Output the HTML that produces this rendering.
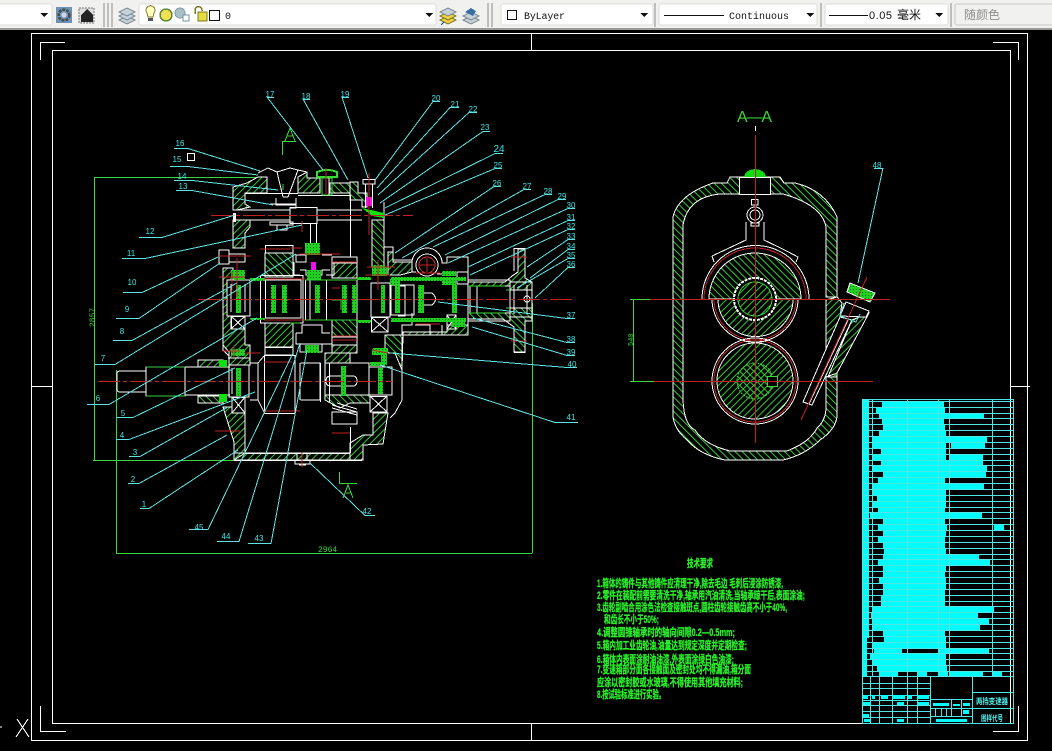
<!DOCTYPE html>
<html lang="zh"><head><meta charset="utf-8"><title>CAD</title>
<style>
html,body{margin:0;padding:0;background:#000;width:1052px;height:751px;overflow:hidden}
svg{display:block}
text{font-family:"Liberation Sans","Noto Sans CJK SC",sans-serif}
.m{font-family:"Liberation Mono","Noto Sans CJK SC",monospace}
.w{fill:none;stroke:#fff;stroke-width:1}
.c{fill:none;stroke:#5fe3e3;stroke-width:1}
.g{fill:none;stroke:#38d838;stroke-width:1}
.r{fill:none;stroke:#c02222;stroke-width:1}
.rc{fill:none;stroke:#c02222;stroke-width:1;stroke-dasharray:22 3 4 3}
.l text{fill:#3ee6e6;font-size:8px;text-anchor:middle}
.t text{fill:#2bf02b;font-size:11px;font-weight:bold;stroke:#2bf02b;stroke-width:.3}
</style></head><body>
<svg width="1052" height="751" viewBox="0 0 1052 751" xmlns="http://www.w3.org/2000/svg" shape-rendering="crispEdges">
<defs>
<pattern id="a" width="5" height="5" patternUnits="userSpaceOnUse" patternTransform="rotate(45)"><rect width="1" height="5" fill="#35c935"/></pattern>
<pattern id="b" width="5" height="5" patternUnits="userSpaceOnUse" patternTransform="rotate(-45)"><rect width="1" height="5" fill="#35c935"/></pattern>
<pattern id="d" width="3" height="3" patternUnits="userSpaceOnUse"><rect width="3" height="3" fill="#1fd01f"/><rect x="1" y="1" width="1" height="1" fill="#062"/></pattern>
</defs>
<rect width="1052" height="751" fill="#000"/>

<!-- toolbar -->
<rect width="1052" height="28" fill="#f1f1ef"/>
<rect y="28" width="1052" height="2" fill="#9a9a98"/>
<g fill="#fff" stroke="#dcdcd8"><rect x="-3" y="4" width="55" height="21" rx="2"/><rect x="139" y="4" width="297" height="21" rx="2"/><rect x="501" y="4" width="152" height="21" rx="2"/><rect x="659" y="4" width="158" height="21" rx="2"/><rect x="825" y="4" width="123" height="21" rx="2"/></g>
<rect x="955" y="4" width="100" height="21" rx="2" fill="#f1f1ef" stroke="#c8c8c4"/>
<g fill="#111"><path d="M40 13h8l-4 4z"/><path d="M425 13h8l-4 4z"/><path d="M640 13h8l-4 4z"/><path d="M806 13h8l-4 4z"/><path d="M935 13h8l-4 4z"/></g>
<g fill="none" stroke="#8a8a88"><path d="M104 3v24M108 3v24M112 3v24M488 3v24M492 3v24M655 3v24M821 3v24M951 3v24"/></g>
<!-- gear icon -->
<rect x="56" y="7" width="16" height="16" fill="#6d92b5"/>
<circle cx="64" cy="15" r="5.500" fill="none" stroke="#4a4a4a" stroke-width="2.500" stroke-dasharray="3 1"/><circle cx="64" cy="15" r="2.500" fill="#cfd8e0"/>
<!-- house icon -->
<rect x="79" y="8" width="15" height="15" fill="#dedede" stroke="#777" stroke-dasharray="2 1"/>
<path d="M81 15l6-6 6 6v7H81z" fill="#222"/>
<!-- layers icons -->
<g fill="#c5d2d8" stroke="#6f7f88"><path d="M119 20l8-4 8 4-8 4z"/><path d="M119 16l8-4 8 4-8 4z"/><path d="M119 12l8-4 8 4-8 4z"/></g>
<path d="M147 13a4.500 4.500 0 1 1 7 0l-1 4h-5z" fill="#ffffc0" stroke="#7a7a30"/><rect x="148" y="18" width="5" height="3" fill="#555"/>
<circle cx="166" cy="15" r="6" fill="#f2e050" stroke="#5b8a3a" stroke-width="1.500"/>
<circle cx="180" cy="13" r="5" fill="#a8c0c8" stroke="#7a9aa5"/><rect x="183" y="15" width="6" height="6" fill="#fff" stroke="#7a8fa8"/>
<path d="M195 14v-4a3.500 3.500 0 0 1 7 0v1" fill="none" stroke="#7a7a20" stroke-width="1.500"/><rect x="198" y="12" width="9" height="9" fill="#e4dc40" stroke="#7a7a20"/>
<rect x="209.500" y="10.500" width="10" height="10" fill="#fff" stroke="#111"/>
<text x="225" y="19" font-size="10" fill="#111" class="m">0</text>
<g fill="#f0d040" stroke="#6f6a20"><path d="M440 20l8-4 8 4-8 4z"/><path d="M440 16l8-4 8 4-8 4z"/></g><path d="M440 12l8-4 8 4-8 4z" fill="#c5d2d8" stroke="#6f7f88"/><path d="M441 25l3-3" stroke="#124a9a"/>
<g fill="#c5d2d8" stroke="#6f7f88"><path d="M463 20l8-4 8 4-8 4z"/><path d="M463 16l8-4 8 4-8 4z"/></g><path d="M465 12l6-4 5 3-3 5z" fill="#3a6ea8"/>
<rect x="507.500" y="10.500" width="9" height="9" fill="#fff" stroke="#111"/>
<text x="524" y="19" font-size="10" fill="#111" class="m" textLength="41">ByLayer</text>
<path d="M664 15.500h60" stroke="#111" fill="none"/>
<text x="729" y="19" font-size="10" fill="#111" class="m" textLength="60">Continuous</text>
<path d="M829 15.500h39" stroke="#111" fill="none"/>
<text x="869" y="19" font-size="11" fill="#111" textLength="23">0.05</text>
<text x="897" y="19" font-size="12" fill="#111" textLength="24">毫米</text>
<text x="964" y="19" font-size="12" fill="#8d8d8d" textLength="36">随颜色</text>

<!-- frames -->
<g class="w">
<rect x="31.500" y="33.500" width="996" height="707"/>
<rect x="52.500" y="50.500" width="958" height="673"/>
<path d="M65 42.500H40.500V60M993 42.500H1018.500V60M40.500 706V731.500H66M993 731.500H1018.500V706"/>
<path d="M531.500 33v17M531.500 724v17M31 386.500h21M1011 386.500h19"/>
<path d="M17 719l12 18M28 719l-12 18M0 727h2"/>
</g>

<!-- dimensions left -->
<g class="g">
<path d="M94.500 177V460M94 177.500H258M93 460.500H234M116.500 370V553M116 553.500H532M532.500 303V553"/>
<path d="M282.500 155V141.500H296M285 141l5-13 5 13M287 136h6"/>
<path d="M339.500 472V483.500H357M343 498l5-13 5 13M345 493h6"/>
</g>
<text transform="translate(95,327) rotate(-90)" font-size="8" fill="#38d838" class="m">2857</text>
<text x="318" y="552" font-size="8" fill="#38d838" class="m">2964</text>

<!-- hatched bodies left view -->
<g stroke="#fff" stroke-width="1">
<path fill="url(#a)" d="M233 187L247 183L258 177H267V193H245V204L250 207L237 210H233Z"/>
<path fill="url(#a)" d="M233 220H250V227L245 233V248H233Z"/>
<path fill="url(#a)" d="M298 177L307 172V178H320V193H298Z"/>
<path fill="url(#b)" d="M330 183H350V193H330Z"/>
<path fill="url(#b)" d="M350 182H358V193H367V207H362V200H350Z"/>
<path fill="url(#b)" d="M372 220H384V267H372Z"/>
<path fill="url(#a)" d="M223 268H233V280H227V316H231V329H245V345H250V365H229V352L223 345Z"/>
<path fill="url(#a)" d="M223 407L234 442V460L245 453V413H232V407Z"/>
<path fill="url(#a)" d="M234 453H350V460H234Z"/>
<path fill="url(#a)" d="M350 453V443L363 435H373V413H388L383 444L363 445V460H350Z"/>
<path fill="url(#b)" d="M385 335H403L402 370L395 353H385Z"/>
<path fill="url(#a)" d="M388 252H393V262H412V272L400 275H388Z"/>
<path fill="url(#b)" d="M265 253H293V277H265Z"/>
<path fill="url(#a)" d="M265 323H293V347H265Z"/>
<path fill="url(#a)" d="M332 263H357V278H332Z"/>
<path fill="url(#b)" d="M332 320H357V337H332Z"/>
<path fill="url(#a)" d="M332 345H357V353H332Z"/>
<path fill="url(#a)" d="M325 353H350V363H325Z"/>
<path fill="url(#b)" d="M325 395H370V403H350L340 408L325 400Z"/>
<path fill="url(#a)" d="M198 360H223V367H198Z"/>
<path fill="url(#b)" d="M198 396H223V403H198Z"/>
<path fill="url(#a)" d="M468 282H505L512 276L518 272V249H525V278L532 282V290H510V286H468Z"/>
<path fill="url(#b)" d="M468 313H510V308H532V321H525V352H514V327L503 319H468Z"/>
<path fill="url(#a)" d="M403 335H468V325H447V332H403Z"/>
</g>

<!-- white lines -->
<g class="w">
<path d="M258 173L268 168L277 172L283 197M290 168L277 172M290 168L298 170L307 172V176M298 170L288 197M283 197H288M276 198V205H296V198M270 204H296V208H290"/>
<path d="M235 210H290M235 220H290M290 207.500H317V223.500H290ZM317 210H362M317 220H362M310.500 223V252M316.500 223V252M350.500 195V257M298 195.500H350"/>
<path d="M270 222H293V225H270ZM277 225V230H287V225"/>
<path d="M363 179.500H375V184H363ZM365.500 184V208M372.500 184V208"/>
<path d="M219 250H229V264H219ZM229 254H245V262H229Z"/>
<path d="M265.500 245.500H293V253H265.500ZM260.500 275.500H303V323H260.500ZM265.500 280V318H301V280ZM265 347.500H293V355H265Z"/>
<path d="M264.500 355.500H295V413.500H264.500ZM258 363L264 356M258 400L264 412M258 363V400"/>
<path d="M305.500 280H357V320H305.500ZM310 280V320M326.500 280V320"/>
<path d="M332 257H357V263H332ZM357 337H332V345H357Z"/>
<path d="M296 255H306V262H296ZM322 255H332M294 262V275H300M334 262V275H326M300 270H306V275H322V270H330"/>
<path d="M296 333H302V325H322V333H330M296 333V344H332V333M300 344V352H322V344"/>
<path d="M227 280H250V316H227ZM231 284V312M245 284V312"/>
<path d="M231.500 316.500H245V329H231.500ZM231 316L245 329M245 316L231 329"/>
<path d="M371.500 317.500H388V332H371.500ZM371 317L388 332M388 317L371 332"/>
<path d="M232 397.500H245V413H232ZM232 397L245 413M245 397L232 413"/>
<path d="M370 396.500H387V412H370ZM370 396L387 412M387 396L370 412"/>
<path d="M229 365H249V397H229ZM232 368V394M250 363H258V400H250M228 358H250V365"/>
<path d="M371 283H390V317H371ZM369 367H392V395H369Z"/>
<path d="M325 363H369V395H325ZM329.500 363V402M320.500 363V402M300.500 363H320V400H300.500M300 363V400"/>
<path d="M331 376H353Q357 376 357 381Q357 386 353 386H331Q326 386 326 381Q326 376 331 376Z"/>
<path d="M332 412H357V424H332ZM332 405L357 412M332 408L357 415M337 403L357 409"/>
<path d="M350.500 427V453M245 453.500H350M234 460.500H362"/>
<path d="M223 268V350L229 356V365"/>
<path d="M117 374Q117 371 120 371H146V392H120Q117 392 117 389ZM146 367H185V396H146ZM185 367H230M185 395H230M185 367V396"/>
<path d="M297 453V460M307 453V460M295 460.500H310V464H295ZM299 465H306"/>
<path d="M245 193.500H298M384 202V247H393V260H412"/>
<path d="M412 263A15 15 0 0 1 442 263H447V257H468V335H403M402 337V400L395 413L390 418"/>
<path d="M412 263V272H416M437 274H447"/>
<path d="M468 280H510V282H532V317H510V321H468M470 286H505M470 313H505M477 286V313M470 286V313"/>
<path d="M514 248.500H525V278M514 248V271M514 352.500H525V321M514 352V327"/>
<path d="M510 282V317M514 285V314M527 285V314M520 290H532M520 308H532M532 290V308"/>
<path d="M391 285H414V315H391ZM402 335V325H412V313M415 325H430V335M442 325V335M422 293H432Q439 299 432 305H422Q415 299 422 293Z"/>
<path d="M447 315H456V329H447ZM447 315L456 329M456 315L447 329M457 272H468V284H457Z"/>
<path d="M398 286H405V316H398"/>
</g>
<circle cx="427" cy="265" r="11" class="w"/>
<circle cx="427" cy="265" r="8" class="r" style="stroke:#d03030"/>
<circle cx="527" cy="299" r="3" class="w"/>

<!-- green solid & dotted -->
<g fill="url(#d)">
<rect x="271" y="285" width="5" height="28"/><rect x="282" y="285" width="5" height="28"/>
<rect x="315" y="285" width="5" height="28"/><rect x="342" y="285" width="5" height="28"/><rect x="352" y="285" width="5" height="28"/>
<rect x="236" y="285" width="5" height="28"/><rect x="381" y="285" width="4" height="28"/><rect x="247" y="286" width="1" height="1"/>
<rect x="236" y="368" width="5" height="28"/><rect x="341" y="366" width="5" height="30"/><rect x="378" y="368" width="5" height="26"/>
<rect x="231" y="270" width="14" height="9"/><rect x="372" y="267" width="15" height="9"/>
<rect x="231" y="349" width="14" height="7"/><rect x="372" y="349" width="15" height="6"/>
<rect x="305" y="243" width="15" height="12"/><rect x="307" y="270" width="14" height="10"/><rect x="305" y="345" width="14" height="8"/>
<rect x="250" y="278" width="15" height="3"/><rect x="357" y="277" width="14" height="3"/><rect x="250" y="318" width="15" height="2"/><rect x="357" y="320" width="14" height="3"/>
<rect x="391" y="277" width="75" height="4" /><rect x="391" y="318" width="75" height="4"/>
<rect x="442" y="271" width="14" height="5"/><rect x="442" y="281" width="14" height="4"/><rect x="452" y="318" width="13" height="9"/>
<rect x="373" y="348" width="15" height="5"/><rect x="370" y="362" width="15" height="4"/>
<rect x="372" y="265" width="13" height="6"/><rect x="390" y="279" width="10" height="6"/><rect x="418" y="285" width="6" height="28"/><rect x="452" y="285" width="5" height="28"/><rect x="395" y="285" width="5" height="28"/>
<rect x="234" y="274" width="10" height="6"/><rect x="381" y="354" width="6" height="11"/>
</g>
<g fill="#10e010">
<rect x="219" y="360" width="8" height="7"/><rect x="219" y="394" width="8" height="8"/>
<path d="M362 208L384 213V218L372 216Z"/>
<path d="M317 172Q327 168 337 172V177H317Z" fill="none" stroke="#30e030" stroke-width="2"/>
</g>
<path d="M322 178H332V195H322Z" fill="none" stroke="#30e030" stroke-width="1"/>
<path d="M326 178V195M329 178V195" stroke="#fff" fill="none"/>
<path d="M146 367H185M146 396H185M320 280H357M290 323H300M305 280H357M305 320H357" stroke="#3bd03b" fill="none"/>
<path d="M283 300V290M283 300H288M341 300H332M341 300V310M468 286H505M468 313H505" stroke="#38d838" fill="none"/>
<path d="M510 290H506M510 308H506" stroke="#38d838"/>
<path d="M283 190V184" stroke="#38d838" fill="none"/>
<rect x="311" y="262" width="5" height="8" fill="#f010f0"/>
<rect x="366" y="197" width="6" height="9" fill="#f010f0"/>
<rect x="233" y="213" width="3" height="9" fill="#fff"/>

<!-- red center lines -->
<g class="rc"><path d="M198 299.500H574"/><path d="M98 381.500H392"/><path d="M211 215.500H413"/></g>
<g class="r">
<path d="M326 168V195M369 173V235M302 452V467M302 221V232M237 258V297M219 256H251M265 249H290M260 249H265M291 248H302"/>
<path d="M264 362H292M264 411H300M245 353H260M332 288H340M332 340H357M332 433H350M215 431H240M222 351H240M234 345V357M372 350L388 353M378 260V290M367 267H395M365 275H390M511 257H527M511 341H527M416 324H440M416 273H440M264 279H305M264 320H305M332 262H357M332 336H357M219 277H245M232 272V290M427 258V272M420 265H434M300 254H340"/>
</g>

<!-- leaders -->
<g class="c">
<path d="M174 148.500H188L260 171M170 166.500H188L258 175M174 180.500H192L278 190M176 190.500H192L273 205M139 237.500H162L235 215M122 258.500H145L302 225M123 292.500H142L218 257M116 318.500H139L220 263M113 340.500H132L237 283M95 364.500H115L296 254M87 404.500H109L257 318M117 417.500H133L235 368M116 439.500H129L255 392M129 456.500H140L228 407M128 483.500H139L227 435M140 508.500H149L238 450"/>
<path d="M189 529.500H208L293 353M217 541.500H239L300 343M248 543.500H271L307 350M375 515.500H365L310 463"/>
<path d="M267 97.500H274M267 97L323 170M303 99.500H310M303 99L348 180M342 97.500H349M342 97L368 178"/>
<path d="M440 101.500H433L375 180M459 107.500H450L377 188M477 112.500H469L378 195M490 131.500H483L380 203M503 153.500H495L385 208M502 168.500H495L385 215M501 186.500H494L395 253M531 189.500H524L402 258M552 194.500H545L433 247M566 199.500H558L445 255M575 208.500H568L448 263M575 220.500H568L468 267M575 229.500H568L470 275M575 239.500H568L527 267M575 249.500H568L530 278M575 258.500H568L517 288M575 267.500H568L535 298"/>
<path d="M575 318.500H567L438 302M575 342.500H567L473 318M575 355.500H567L472 327M577 367.500H567L390 353M578 422.500H555L380 365"/>
<path d="M883 168.500H874M883 168L858 283"/>
</g>
<rect x="187.500" y="153.500" width="7" height="7" class="w"/>

<g class="l">
<text x="180" y="146">16</text><text x="177" y="162" font-size="9">15</text><text x="182" y="179">14</text><text x="183" y="189">13</text><text x="150" y="234">12</text><text x="131" y="256">11</text><text x="132" y="285">10</text><text x="127" y="312">9</text><text x="122" y="334">8</text><text x="103" y="361">7</text><text x="98" y="401">6</text><text x="123" y="416">5</text><text x="122" y="438">4</text><text x="135" y="455">3</text><text x="133" y="482">2</text><text x="144" y="507">1</text><text x="199" y="530">45</text><text x="226" y="539">44</text><text x="259" y="541">43</text><text x="367" y="514">42</text>
<text x="270" y="97">17</text><text x="306" y="99">18</text><text x="345" y="97">19</text><text x="436" y="101">20</text><text x="455" y="107">21</text><text x="473" y="112">22</text><text x="485" y="130">23</text><text x="499" y="152" style="font-size:10px">24</text><text x="498" y="168">25</text><text x="497" y="186">26</text><text x="527" y="189">27</text><text x="548" y="194">28</text><text x="562" y="199">29</text><text x="571" y="208">30</text><text x="571" y="220">31</text><text x="571" y="229">32</text><text x="571" y="239">33</text><text x="571" y="249">34</text><text x="571" y="258">35</text><text x="571" y="267">36</text><text x="571" y="318">37</text><text x="571" y="342">38</text><text x="571" y="355">39</text><text x="572" y="367">40</text><text x="571" y="420">41</text><text x="877" y="168">48</text>
</g>

<!-- A-A view -->
<text x="754.500" y="122" font-size="16" fill="#38d838" text-anchor="middle" textLength="35">A—A</text>
<path d="M755.500 126v5" stroke="#fff" fill="none"/>
<path fill="url(#b)" fill-rule="evenodd" stroke="#fff" d="M730 177H780L784 183H795Q825 190 837 217V297H826V227Q822 205 783 194H720Q688 197 683 225V400Q684 425 695 430Q705 445 730 451H787Q810 442 817 428Q826 420 826 407V377L837 373V417Q835 430 820 440Q805 455 783 460H725Q700 455 687 440Q675 430 673 417V217Q678 195 713 183H727Z"/>
<path fill="url(#a)" stroke="#fff" d="M826 300L837 297L842 303L840 317L826 350Z"/>
<path fill="url(#a)" stroke="#fff" d="M852 320L869 313L837 373V377H828Z"/>
<rect x="739.500" y="177.500" width="31" height="17" fill="#000" stroke="#fff"/>
<path d="M744 177Q745 170 755 169Q765 170 766 177Z" fill="#12d812"/>
<path d="M751.500 199.500H758V205H751.500Z" class="w"/>
<path d="M712 256Q725 250 746 240V222M764 222V240Q785 250 798 257L796 262M712 256L714 262" class="w"/>
<circle cx="755" cy="215" r="8" class="w"/><circle cx="755" cy="215" r="5" class="w"/><path d="M751 223h8v3h-8z" class="w"/>
<!-- upper wheel -->
<path d="M702 299A53 53 0 0 1 809 299" class="w"/>
<path d="M704 299A51 51 0 0 1 806 299" class="r"/>
<path d="M709 299A46 46 0 0 1 801 299Z" fill="url(#b)" stroke="#fff"/>
<path d="M712 299A43 43 0 0 0 798 299" class="w"/>
<path d="M714 299A41 41 0 0 0 796 299" class="r"/>
<path d="M718 299A37.500 37.500 0 0 0 793 299Z" fill="url(#a)" stroke="#fff"/>
<circle cx="755" cy="299" r="21" fill="#000" stroke="#fff" stroke-width="2" stroke-dasharray="3 1"/>
<circle cx="755" cy="299" r="17" fill="url(#a)" stroke="#38d838"/>
<!-- lower wheel -->
<circle cx="755" cy="381" r="43" class="w"/>
<circle cx="755" cy="381" r="41" class="r"/>
<circle cx="755" cy="381" r="38" fill="url(#a)" stroke="#fff"/>
<circle cx="755" cy="381" r="18" fill="url(#b)" stroke="#38d838" stroke-dasharray="2 1"/>
<rect x="767.500" y="376.500" width="10" height="10" fill="#000" stroke="#38d838"/>
<path d="M737 338Q755 347 773 338" class="w"/>
<!-- dipstick -->
<path d="M850 283L875 293L870 302L847 292Z" fill="url(#d)" stroke="#fff"/>
<path d="M846 302L869 311L866 317L840 316ZM852 320L840 317L803 402L812 405Z" fill="#000" stroke="#fff"/>
<path d="M844 303L840 316L856 322L860 314" class="c"/>
<path d="M848 320L809 404" class="w"/>
<!-- center lines -->
<g class="r">
<path d="M755.500 135V443M650 299.500H890M653 381.500H873M867 277L801 420"/>
</g>
<g class="g"><path d="M630 299.500H650M630 381.500H654M633.500 299V381"/></g>
<text transform="translate(633,346) rotate(-90)" font-size="7" fill="#38d838" class="m">540</text>

<!-- tech requirements -->
<g class="t">
<text x="687" y="567" textLength="26" lengthAdjust="spacingAndGlyphs">技术要求</text>
<text x="597" y="587" textLength="186" lengthAdjust="spacingAndGlyphs">1.箱体的铸件与其他铸件应清理干净,除去毛边 毛刺后浸涂防锈漆,</text>
<text x="597" y="599" textLength="208" lengthAdjust="spacingAndGlyphs">2.零件在装配前需要清洗干净,轴承用汽油清洗,当轴承晾干后,表面涂油;</text>
<text x="597" y="611" textLength="190" lengthAdjust="spacingAndGlyphs">3.齿轮副啮合用涂色法检查接触斑点,圆柱齿轮接触齿高不小于40%,</text>
<text x="604" y="623" textLength="55" lengthAdjust="spacingAndGlyphs">和齿长不小于50%;</text>
<text x="597" y="636" textLength="138" lengthAdjust="spacingAndGlyphs">4.调整圆锥轴承时的轴向间隙0.2—0.5mm;</text>
<text x="597" y="649" textLength="150" lengthAdjust="spacingAndGlyphs">5.箱内加工业齿轮油,油量达到规定深度并定期检查;</text>
<text x="597" y="663" textLength="137" lengthAdjust="spacingAndGlyphs">6.箱体内表面涂耐油油漆,外表面涂绿白色油漆;</text>
<text x="597" y="673" textLength="154" lengthAdjust="spacingAndGlyphs">7.变速箱部分面各接触面及密封处均不得漏油,箱分面</text>
<text x="597" y="686" textLength="146" lengthAdjust="spacingAndGlyphs">应涂以密封胶或水玻璃,不得使用其他填充材料;</text>
<text x="597" y="698" textLength="68" lengthAdjust="spacingAndGlyphs">8.按试验标准进行实验。</text>
</g>

<!-- parts table -->
<g fill="#00fdfd">
<rect x="862" y="400" width="7" height="238"/><rect x="862" y="638" width="5" height="38"/>
<path d="M882 402H944v5H882zM876 408H945v5H876zM879 414H984v5H879zM882 419H944v5H882zM883 425H945v5H883zM879 431H946v5H879zM872 437H987v5H872zM872 443H946v5H872zM951 443H985v5H951zM881 449H946v5H881zM872 455H946v5H872zM949 455H983v5H949zM881 461H983v5H881zM872 466H987v5H872zM883 472H986v5H883zM878 478H945v5H878zM872 484H984v5H872zM872 490H946v5H872zM877 496H946v5H877zM872 502H946v5H872zM878 508H945v5H878zM870 513H982v5H870zM883 519H945v5H883zM878 525H947v5H878zM994 525H1004v5H994zM883 531H946v5H883zM878 537H945v5H878zM883 543H945v5H883zM884 549H946v5H884zM883 555H979v5H883zM878 560H990v5H878zM883 566H946v5H883zM883 572H945v5H883zM879 578H946v5H879zM883 584H946v5H883zM883 590H945v5H883zM881 596H945v5H881zM881 602H945v5H881zM872 607H994v5H872zM871 613H978v5H871zM872 619H989v5H872zM872 625H980v5H872zM883 631H945v5H883zM884 637H946v5H884zM873 643H946v5H873zM874 649H902v5H874zM938 649H989v5H938zM870 654H946v5H870zM872 660H946v5H872zM877 666H947v5H877zM879 672H898v4H879zM917 672H927v4H917zM938 672H948v4H938zM950 672H983v4H950zM992 672H1002v4H992z"/>
</g>
<g fill="none" stroke="#4fe6e6" stroke-width="1">
<path d="M862 399.500H1014M862 401.500H1014M862 407.500H1014M862 413.500H1014M862 418.500H1014M862 424.500H1014M862 430.500H1014M862 436.500H1014M862 442.500H1014M862 448.500H1014M862 454.500H1014M862 460.500H1014M862 465.500H1014M862 471.500H1014M862 477.500H1014M862 483.500H1014M862 489.500H1014M862 495.500H1014M862 501.500H1014M862 507.500H1014M862 512.500H1014M862 518.500H1014M862 524.500H1014M862 530.500H1014M862 536.500H1014M862 542.500H1014M862 548.500H1014M862 554.500H1014M862 559.500H1014M862 565.500H1014M862 571.500H1014M862 577.500H1014M862 583.500H1014M862 589.500H1014M862 595.500H1014M862 601.500H1014M862 606.500H1014M862 612.500H1014M862 618.500H1014M862 624.500H1014M862 630.500H1014M862 636.500H1014M862 642.500H1014M862 648.500H1014M862 653.500H1014M862 659.500H1014M862 665.500H1014M862 671.500H1014M862 676.500H1014"/>
<path d="M872.500 399V676M907.500 399V676M938.500 399V676M949.500 399V676M992.500 399V676M1013.500 399V723M862.500 399V723"/>
<path d="M862 723.500H1014M870.500 677V723M879.500 677V723M892.500 677V723M907.500 677V723M917.500 677V723M930.500 677V723M972.500 677V723"/>
<path d="M862 683.500H930M862 688.500H930M862 695.500H930M862 700.500H930M862 705.500H930M862 711.500H930M862 717.500H930"/>
<path d="M930 699.500H972M930 708.500H972M930 716.500H972M951.500 699V716M961.500 699V716M935.500 708V716M941.500 708V716M946.500 708V716"/>
<path d="M972 692.500H1014M972 708.500H1014"/>
</g>
<g fill="#00fdfd">
<path d="M863 695h5v4h-5zM872 695h3v4h-3zM881 695h7v4h-7zM893 695h12v4h-12zM908 695h4v4h-4zM917 695h12v4h-12zM863 702h7v3h-7zM897 702h7v3h-7zM918 702h11v3h-11zM863 714h6v3h-6zM864 719h6v3h-6zM897 719h7v3h-7zM933 703h16v3h-16zM953 704h7v2h-7zM963 703h7v3h-7zM936 719h31v3h-31zM963 710h6v4h-6z"/>
</g>
<g fill="#4ff0f0" font-weight="bold" text-anchor="middle">
<text x="992" y="704" font-size="8" textLength="32" lengthAdjust="spacingAndGlyphs">两挡变速器</text>
<text x="992" y="721" font-size="8" textLength="22" lengthAdjust="spacingAndGlyphs">图样代号</text>
</g>
</svg>
</body></html>
